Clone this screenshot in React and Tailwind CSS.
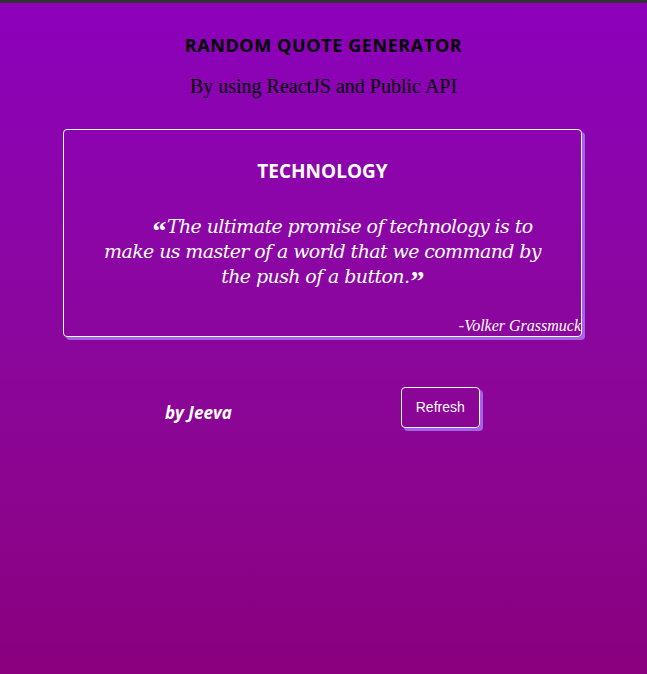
import React from 'react';

const quote = {
    category: 'technology',
    text: 'The ultimate promise of technology is to make us master of a world that we command by the push of a button.',
    author: 'Volker Grassmuck',
};

const App = () => (
    <div className="min-h-screen border-t-[3px] border-[#333] bg-gradient-to-b from-[#8c00bb] to-[#8a007e] flex flex-col items-center">
        <h1 className="mt-[29px] text-[18px] font-bold text-black uppercase tracking-[0.6px] font-['Open_Sans',sans-serif]">
            Random Quote Generator
        </h1>
        <p className="mt-[12px] text-[20px] text-black font-['Liberation_Serif',serif]">By using ReactJS and Public API</p>

        <div className="mt-[28px] -ml-[2px] w-[519px] h-[208px] border border-white rounded-[4px] shadow-[3px_3px_0_#a463e6] flex flex-col items-center">
            <h2 className="mt-[27px] text-[19px] font-bold text-white uppercase font-['Open_Sans',sans-serif]">
                {quote.category}
            </h2>
            <p className="mt-[28px] px-[40px] text-center text-[19px] leading-[25px] italic text-white font-['DejaVu_Serif',serif] tracking-[-0.6px]">
                <span className="text-[28px] leading-[0] not-italic font-bold align-[-7px] ml-[40px] mr-[1px] font-['Liberation_Serif',serif]">&ldquo;</span>
                {quote.text}
                <span className="text-[28px] leading-[0] not-italic font-bold align-[-7px] ml-[1px] font-['Liberation_Serif',serif]">&rdquo;</span>
            </p>
            <span className="mt-auto -mb-[2px] self-end text-[16px] italic text-white font-['Liberation_Serif',serif]">
                -{quote.author}
            </span>
        </div>

        <div className="mt-[50px] w-[519px] flex items-center">
            <span className="ml-[101px] mt-[10px] text-[17px] font-bold italic text-white font-['Open_Sans',sans-serif]">by Jeeva</span>
            <button className="ml-[169px] w-[79px] h-[41px] border border-white rounded-[4px] text-[14px] text-white shadow-[3px_3px_0_#a463e6] font-['Liberation_Sans',sans-serif]">
                Refresh
            </button>
        </div>
    </div>
);

export default App;
